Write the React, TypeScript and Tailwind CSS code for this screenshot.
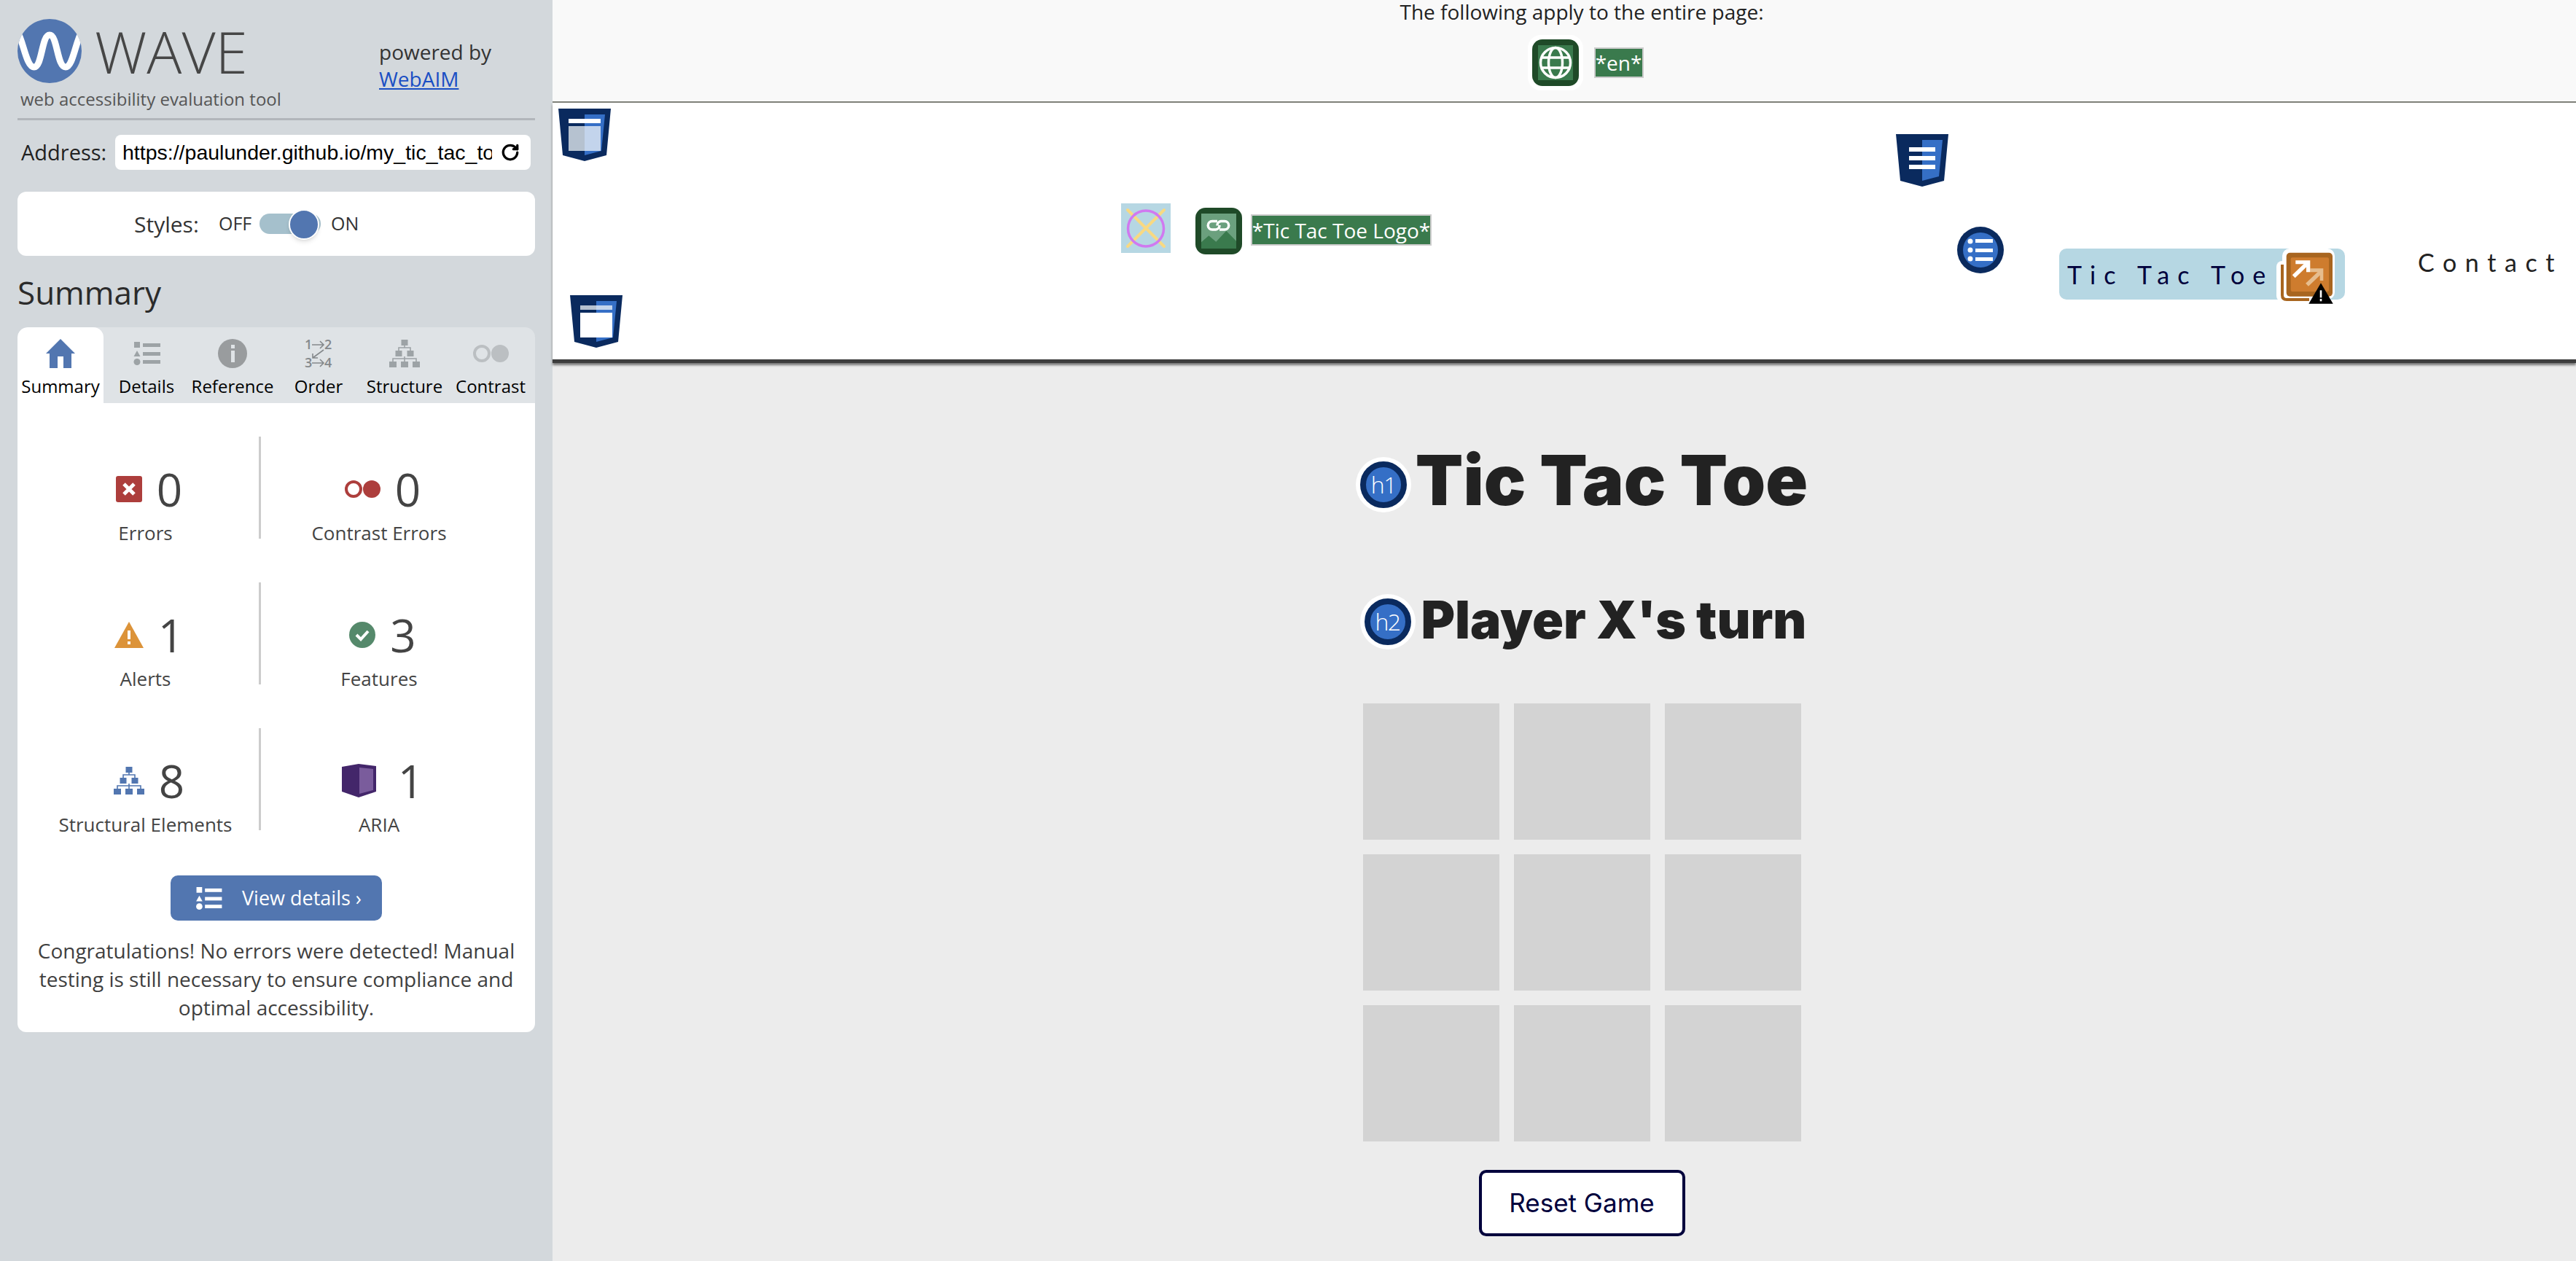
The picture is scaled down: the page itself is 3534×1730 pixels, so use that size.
import { RotateCw } from "lucide-react";

const OPEN = "font-['Open_Sans','Noto_Sans',sans-serif]";

const ListGlyph = ({ className = "" }: { className?: string }) => (
  <svg viewBox="0 0 37 32" className={className} fill="currentColor">
    <rect x="1" y="0" width="8" height="8" />
    <path d="M5 12 L9.5 20 H0.5 Z" />
    <circle cx="5" cy="27.5" r="4.5" />
    <rect x="13" y="2" width="24" height="5" />
    <rect x="13" y="14" width="24" height="5" />
    <rect x="13" y="25" width="24" height="5" />
  </svg>
);

const TreeGlyph = ({ className = "" }: { className?: string }) => (
  <svg viewBox="0 0 42 38" className={className} fill="currentColor">
    <rect x="16.5" y="0" width="9" height="8" />
    <rect x="8.5" y="15" width="9" height="8" />
    <rect x="24.5" y="15" width="9" height="8" />
    <rect x="0" y="30" width="10" height="8" />
    <rect x="16" y="30" width="10" height="8" />
    <rect x="32" y="30" width="10" height="8" />
    <path d="M21 8v3M13 15v-4h16v4M21 23v7M5 30v-4h32v4" fill="none" stroke="currentColor" strokeWidth="1.6" />
  </svg>
);

const Shield = ({ kind, className = "" }: { kind: "top" | "bottom" | "nav"; className?: string }) => (
  <svg viewBox="0 0 72 72" className={className}>
    <path d="M0 0H72L66 64L36 72L6 64Z" fill="#0a2a5e" />
    <path d="M36 8H64L59 58L36 64Z" fill="#356fc6" />
    {kind === "top" && (
      <>
        <rect x="14" y="14" width="44" height="6" fill="#fff" />
        <rect x="14" y="24" width="22" height="34" fill="#b6c2d0" />
        <rect x="36" y="24" width="22" height="34" fill="#c3d4ec" />
      </>
    )}
    {kind === "bottom" && (
      <>
        <rect x="14" y="14" width="22" height="6" fill="#b6c2d0" />
        <rect x="36" y="14" width="22" height="6" fill="#c3d4ec" />
        <rect x="14" y="24" width="44" height="34" fill="#fff" />
      </>
    )}
    {kind === "nav" && (
      <>
        <rect x="18" y="18" width="36" height="6" fill="#fff" />
        <rect x="18" y="30" width="36" height="6" fill="#fff" />
        <rect x="18" y="42" width="36" height="6" fill="#fff" />
      </>
    )}
  </svg>
);

const HeadingBadge = ({ label }: { label: string }) => (
  <span className="flex h-[76px] w-[76px] shrink-0 items-center justify-center rounded-full bg-white">
    <span className="flex h-[64px] w-[64px] items-center justify-center rounded-full border-[8px] border-[#0a2a5e] bg-[#356fc6] font-['Open_Sans',sans-serif] text-[32px] font-light tracking-[-1.5px] text-white">
      {label}
    </span>
  </span>
);

const Stat = ({ icon, value, label, left }: { icon: React.ReactNode; value: number; label: string; left?: boolean }) => (
  <div className={`flex h-[140px] flex-col items-center ${left ? "w-[314px] border-r-[3px] border-[#cccccc]" : "w-[324px]"}`}>
    <div className="mt-[37px] flex h-[70px] shrink-0 items-center gap-[20px] pl-[10px]">
      {icon}
      <span className="text-[62px] leading-none font-normal text-[#444444]">{value}</span>
    </div>
    <span className="mt-[17px] text-[26px] leading-[16px] text-[#444444]">{label}</span>
  </div>
);

const TABS = ["Summary", "Details", "Reference", "Order", "Structure", "Contrast"];

const TabIcon = ({ name }: { name: string }) => {
  if (name === "Summary")
    return (
      <svg viewBox="0 0 40 40" className="h-[40px] w-[40px]">
        <path d="M20 0L40 20H35V40H24V24H16V40H5V20H0Z" fill="#5276b0" />
      </svg>
    );
  if (name === "Details") return <ListGlyph className="h-[40px] w-[37px] text-[#9da3a6]" />;
  if (name === "Reference")
    return (
      <svg viewBox="0 0 40 40" className="h-[40px] w-[40px]">
        <circle cx="20" cy="20" r="20" fill="#999c9e" />
        <rect x="18" y="8" width="5" height="5" fill="#dfe3e6" />
        <rect x="18" y="16" width="5" height="16" fill="#dfe3e6" />
      </svg>
    );
  if (name === "Order")
    return (
      <svg viewBox="0 0 38 40" className="h-[40px] w-[38px]" fill="#85898c">
        <text x="0" y="14" fontSize="18" fontWeight="600">1</text>
        <text x="27" y="14" fontSize="18" fontWeight="600">2</text>
        <text x="0" y="39" fontSize="18" fontWeight="600">3</text>
        <text x="27" y="39" fontSize="18" fontWeight="600">4</text>
        <path d="M10 8H26M21 3L26 8L21 13M10 33H26M21 28L26 33L21 38M26 15L11 26M11 20V26H18" fill="none" stroke="#85898c" strokeWidth="1.6" />
      </svg>
    );
  if (name === "Structure") return <TreeGlyph className="h-[40px] w-[42px] text-[#9da3a6]" />;
  return (
    <span className="flex items-center">
      <span className="h-[24px] w-[24px] rounded-full border-[4px] border-[#bbbfc2]" />
      <span className="ml-[1px] h-[24px] w-[24px] rounded-full bg-[#bbbfc2]" />
    </span>
  );
};

const Sidebar = () => (
  <aside className={`flex w-[758px] shrink-0 flex-col bg-[#d3d8dc] px-[24px] ${OPEN}`}>
    <div className="flex h-[165px] shrink-0 border-b-[3px] border-[#b2b6bb]">
      <div className="w-[496px] pt-[26px]">
        <div className="flex items-center">
          <svg viewBox="0 0 88 88" className="h-[88px] w-[88px]">
            <defs>
              <clipPath id="wave-clip">
                <circle cx="44" cy="44" r="44" />
              </clipPath>
            </defs>
            <circle cx="44" cy="44" r="44" fill="#5276b0" />
            <path
              d="M0 18C8 30 12 66 22.7 66C34 66 33 22 44 22C55 22 54 66 66 66C76 66 80 30 88 18"
              fill="none"
              stroke="#fff"
              strokeWidth="9"
              clipPath="url(#wave-clip)"
            />
          </svg>
          <span className="ml-[18px] text-[80px] leading-none font-light text-[#464646]">WAVE</span>
        </div>
        <p className="mt-[5px] ml-[4px] text-[24px] leading-[34px] whitespace-nowrap text-[#555555]">web accessibility evaluation tool</p>
      </div>
      <div className="pt-[53px] text-[28px] leading-[37px] text-[#333333]">
        <p>powered by</p>
        <a className="text-[#1a4fc4] underline">WebAIM</a>
      </div>
    </div>

    <div className="mt-[20px] flex h-[48px] shrink-0 items-center">
      <span className="ml-[5px] w-[129px] text-[29px] text-[#222222]">Address:</span>
      <div className="flex h-[48px] w-[570px] items-center rounded-[8px] bg-white pl-[10px]">
        <span className="w-[507px] overflow-hidden font-['Liberation_Sans',sans-serif] text-[28.5px] whitespace-nowrap text-black">
          https://paulunder.github.io/my_tic_tac_toe
        </span>
        <RotateCw className="ml-[12px] h-[26px] w-[26px] text-black" strokeWidth={3} />
      </div>
    </div>

    <div className="mt-[30px] flex h-[88px] shrink-0 items-center rounded-[12px] bg-white pl-[160px]">
      <span className="w-[116px] text-[30px] text-[#333333]">Styles:</span>
      <span className="w-[56px] text-[25px] text-[#333333]">OFF</span>
      <span className="relative h-[28px] w-[84px] rounded-full bg-[#a5c0cc]">
        <span className="absolute top-[-6px] left-[40px] h-[42px] w-[42px] rounded-full border-[2px] border-white bg-[#5276b0] shadow-md" />
      </span>
      <span className="ml-[14px] text-[25px] text-[#333333]">ON</span>
    </div>

    <h2 className="mt-[20px] shrink-0 text-[44px] leading-[60px] text-[#2b2b2b]">Summary</h2>

    <div className="mt-[18px] flex h-[104px] shrink-0 overflow-hidden rounded-t-[14px] bg-[#dfe3e6]">
      {TABS.map((tab) => (
        <div key={tab} className={`flex w-[118px] flex-col items-center pt-[16px] ${tab === "Summary" ? "rounded-t-[14px] bg-white" : ""}`}>
          <div className="flex h-[40px] items-center">
            <TabIcon name={tab} />
          </div>
          <span className="mt-[8px] text-[24px] leading-[34px] text-black">{tab}</span>
        </div>
      ))}
    </div>

    <div className="h-[863px] shrink-0 rounded-b-[12px] bg-white pt-[46px]">
      <div className="flex flex-col gap-[60px] pl-[20px]">
        <div className="flex">
          <Stat
            left
            value={0}
            label="Errors"
            icon={
              <svg viewBox="0 0 36 36" className="h-[36px] w-[36px]">
                <rect width="36" height="36" rx="3" fill="#ad3e3c" />
                <path d="M11 11L25 25M25 11L11 25" stroke="#fff" strokeWidth="5" />
              </svg>
            }
          />
          <Stat
            value={0}
            label="Contrast Errors"
            icon={
              <span className="flex items-center">
                <span className="h-[24px] w-[24px] rounded-full border-[4px] border-[#ad3e3c]" />
                <span className="ml-[1px] h-[24px] w-[24px] rounded-full bg-[#ad3e3c]" />
              </span>
            }
          />
        </div>
        <div className="flex">
          <Stat
            left
            value={1}
            label="Alerts"
            icon={
              <svg viewBox="0 0 40 36" className="h-[36px] w-[40px]">
                <path d="M20 0L40 36H0Z" fill="#dc9339" />
                <rect x="18" y="12" width="4" height="12" fill="#fff" />
                <rect x="18" y="27" width="4" height="4" fill="#fff" />
              </svg>
            }
          />
          <Stat
            value={3}
            label="Features"
            icon={
              <svg viewBox="0 0 36 36" className="h-[36px] w-[36px]">
                <circle cx="18" cy="18" r="18" fill="#55896b" />
                <path d="M10 18L16 24L26 13" fill="none" stroke="#fff" strokeWidth="4" />
              </svg>
            }
          />
        </div>
        <div className="flex">
          <Stat left value={8} label="Structural Elements" icon={<TreeGlyph className="h-[38px] w-[42px] text-[#5276b0]" />} />
          <Stat
            value={1}
            label="ARIA"
            icon={
              <svg viewBox="0 0 47 46" className="mr-[10px] h-[46px] w-[47px]">
                <path d="M0 4L23 0L47 3V38L23 46L0 38Z" fill="#43266a" />
                <path d="M24 5L43 7V36L24 41Z" fill="#7a5c9c" />
              </svg>
            }
          />
        </div>
      </div>

      <button className="mx-auto mt-[62px] flex h-[62px] w-[290px] items-center rounded-[10px] bg-[#5276b0] pl-[34px] text-[27px] text-white">
        <ListGlyph className="h-[31px] w-[37px] text-white" />
        <span className="ml-[27px]">View details ›</span>
      </button>

      <p className="mt-[22px] px-[10px] text-center text-[28px] leading-[39px] text-[#3f3f3f]">
        Congratulations! No errors were detected! Manual testing is still necessary to ensure compliance and optimal accessibility.
      </p>
    </div>
  </aside>
);

const PageIcons = () => (
  <div className="flex h-[352px] bg-white">
    <div className="ml-[8px] flex w-[96px] flex-col justify-between pt-[8px] pb-[16px]">
      <Shield kind="top" className="h-[72px] w-[72px]" />
      <Shield kind="bottom" className="ml-[16px] h-[72px] w-[72px]" />
    </div>

    <div className="mt-[138px] ml-[676px] flex h-[70px] items-start">
      <svg viewBox="0 0 68 68" className="h-[68px] w-[68px] bg-[#b6d7e3]">
        <path d="M9 9L59 59M59 9L9 59" stroke="#f8d982" strokeWidth="4" strokeLinecap="round" />
        <circle cx="34" cy="34.5" r="24.5" fill="none" stroke="#d079f0" strokeWidth="3.5" />
      </svg>
      <svg viewBox="0 0 64 64" className="mt-[6px] ml-[34px] h-[64px] w-[64px]">
        <rect width="64" height="64" rx="14" fill="#1f4a28" />
        <rect x="8" y="8" width="48" height="48" fill="#6ba07e" />
        <path d="M8 47.3L18.3 38.3L28.3 46.7L42.3 31.7L56 45.7V56H8Z" fill="#3a7a4d" />
        <path
          d="M30 18.5H23A5.7 5.7 0 0 0 23 30H28A5.7 5.7 0 0 0 33 24M33 30H40A5.7 5.7 0 0 0 40 18.5H35A5.7 5.7 0 0 0 30 24.5"
          fill="none"
          stroke="#fff"
          strokeWidth="3.5"
        />
      </svg>
      <span className="mt-[15px] ml-[12px] flex h-[43px] w-[248px] items-center justify-center border-[2px] border-[#cccccc] bg-[#3a7a4d] font-['Open_Sans',sans-serif] text-[28px] whitespace-nowrap text-white">
        *Tic Tac Toe Logo*
      </span>
    </div>

    <div className="relative ml-[637px] w-[224px]">
      <Shield kind="nav" className="mt-[43px] h-[72px] w-[72px]" />
      <svg viewBox="0 0 64 64" className="absolute top-[170px] left-[84px] h-[64px] w-[64px]">
        <circle cx="32" cy="32" r="32" fill="#0a2a5e" />
        <circle cx="32" cy="32" r="24" fill="#356fc6" />
        <circle cx="18" cy="20" r="3.5" fill="#fff" />
        <circle cx="18" cy="32" r="3.5" fill="#fff" />
        <circle cx="18" cy="44" r="3.5" fill="#fff" />
        <rect x="25" y="17" width="24" height="5" fill="#fff" />
        <rect x="25" y="30" width="24" height="5" fill="#fff" />
        <rect x="25" y="42" width="24" height="5" fill="#fff" />
      </svg>
    </div>

    <div className="relative mt-[200px] flex h-[70px] w-[392px] items-center rounded-[10px] bg-[#b6d7e3] pl-[11px] font-['Lato',sans-serif] text-[34px] tracking-[11px] whitespace-nowrap text-[#00003c]">
      Tic Tac Toe
      <svg viewBox="0 0 95 76" className="absolute top-0 left-[298px] h-[76px] w-[95px]">
        <rect x="0" y="17" width="50" height="56" rx="8" fill="#fff" />
        <rect x="8" y="0" width="72" height="70" rx="10" fill="#fff" />
        <path d="M8 22V64Q8 70 14 70H45" fill="none" stroke="#a8651f" strokeWidth="4" />
        <rect x="13.7" y="5.7" width="63.3" height="60" rx="5" fill="#a8651f" />
        <rect x="19.7" y="12.3" width="52.3" height="46.7" rx="2" fill="#ce7c2e" />
        <path d="M42 49.7L62 30.7" stroke="#e6bd8e" strokeWidth="5.5" />
        <path d="M46.3 27.3H64.3V44H59.7V32.3H46.3Z" fill="#e6bd8e" />
        <path d="M23.7 38.3L43.7 19" stroke="#fff" strokeWidth="5.5" />
        <path d="M26.3 16.3H46.3V32.3H41V21.3H26.3Z" fill="#fff" />
        <path d="M61 47.3L77.7 75.7H44.3Z" fill="#000" />
        <rect x="59.7" y="57.3" width="2.6" height="10" fill="#fff" />
        <rect x="59.7" y="69" width="2.6" height="3.3" fill="#fff" />
      </svg>
    </div>

    <span className="mt-[198px] ml-[100px] font-['Lato',sans-serif] text-[34px] leading-[42px] tracking-[11.6px] whitespace-nowrap text-[#222222]">Contact</span>
  </div>
);

const Main = () => (
  <main className="flex min-w-0 flex-1 flex-col bg-[#ececec]">
    <div className="h-[141px] shrink-0 border-b-[2px] border-[#7f8279] bg-[#f9f9f9] pl-[48px] text-center">
      <p className={`text-[28px] leading-[32px] text-[#222222] ${OPEN}`}>The following apply to the entire page:</p>
      <div className="mt-[16px] flex items-center justify-center pl-[10px]">
        <svg viewBox="0 0 76 76" className="h-[76px] w-[76px]">
          <rect width="76" height="76" rx="18" fill="#fff" />
          <rect x="6" y="6" width="64" height="64" rx="14" fill="#1f4a28" />
          <rect x="14" y="14" width="48" height="48" fill="#3a7a4d" />
          <g fill="none" stroke="#fff" strokeWidth="3.5">
            <circle cx="38" cy="38" r="20.5" />
            <ellipse cx="38" cy="38" rx="9.5" ry="20.5" />
            <path d="M18 31H58M18 45H58" />
          </g>
        </svg>
        <span className={`ml-[15px] flex h-[42px] w-[68px] items-center justify-center border-[2px] border-[#cccccc] bg-[#3a7a4d] text-[28px] text-white ${OPEN}`}>*en*</span>
      </div>
    </div>

    <div className="shrink-0 border-b-[5px] border-[#3d3d3d] shadow-[0_3px_3px_#777777]">
      <PageIcons />
    </div>

    <div className="flex flex-col items-center pt-[122px] pl-[48px] font-['Inter',sans-serif]">
      <h1 className="flex h-[90px] items-center gap-[6px] text-[95.5px] font-black whitespace-nowrap text-[#222222]">
        <HeadingBadge label="h1" />
        <span className="mb-[12px]">Tic Tac Toe</span>
      </h1>
      <h2 className="mt-[98px] ml-[4px] flex h-[90px] items-center gap-[8px] text-[71px] font-black whitespace-nowrap text-[#222222]">
        <HeadingBadge label="h2" />
        <span className="mb-[6px]">Player X's turn</span>
      </h2>
      <div className="mt-[67px] grid grid-cols-[repeat(3,187px)] grid-rows-[repeat(3,187px)] gap-[20px]">
        {Array.from({ length: 9 }, (_, i) => (
          <div key={i} className="bg-[#d3d3d3]" />
        ))}
      </div>
      <button className="mt-[39px] h-[91px] w-[283px] rounded-[10px] border-[4px] border-[#00003c] bg-white text-[35px] font-normal text-[#00003c]">
        Reset Game
      </button>
    </div>
  </main>
);

export default function App() {
  return (
    <div className="flex h-[1730px] overflow-hidden">
      <Sidebar />
      <Main />
    </div>
  );
}
